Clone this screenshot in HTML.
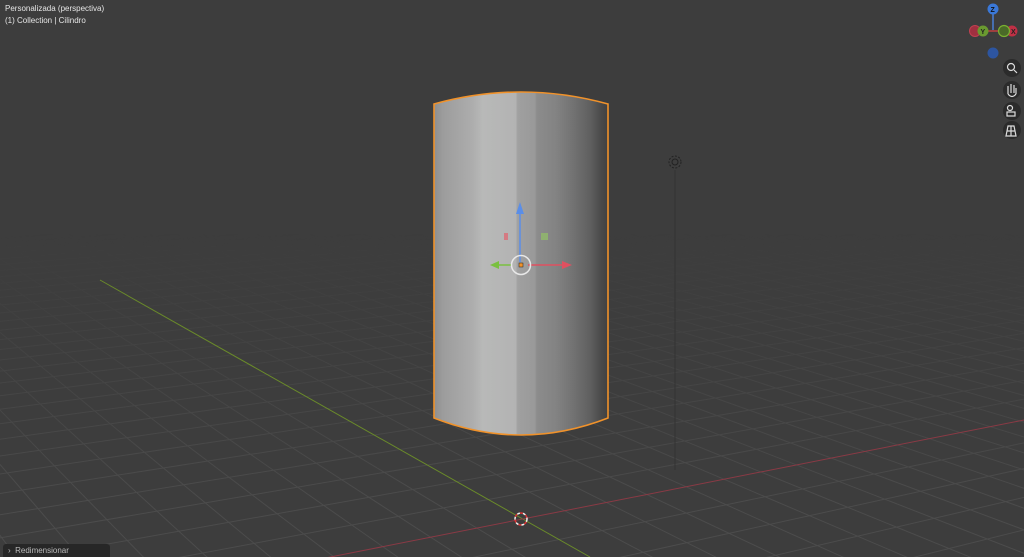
<!DOCTYPE html><html><head><style>
html,body{margin:0;padding:0;background:#3d3d3d;width:1024px;height:557px;overflow:hidden;font-family:"Liberation Sans",sans-serif}
.t{position:absolute;left:5px;color:#e6e6e6;font-size:8px}
.btn{position:absolute;left:1003px;width:18px;height:18px;border-radius:50%;background:#2b2b2b}
</style></head><body>
<svg id="g" width="1024" height="557" style="position:absolute;left:0;top:0">
<defs>
<linearGradient id="fd" x1="0" y1="0" x2="0" y2="1"><stop offset="0.42" stop-color="#fff" stop-opacity="0"/><stop offset="0.9" stop-color="#fff" stop-opacity="1"/></linearGradient>
<mask id="m"><rect width="1024" height="557" fill="url(#fd)"/></mask>
<linearGradient id="cyl" x1="0" x2="1">
<stop offset="0" stop-color="#8e8e8e"/><stop offset="0.05" stop-color="#9c9c9c"/><stop offset="0.12" stop-color="#a3a3a3"/><stop offset="0.22" stop-color="#adadad"/><stop offset="0.28" stop-color="#b8b9b8"/><stop offset="0.47" stop-color="#b3b3b3"/><stop offset="0.48" stop-color="#a0a0a0"/><stop offset="0.58" stop-color="#999"/><stop offset="0.59" stop-color="#8c8c8c"/><stop offset="0.7" stop-color="#838383"/><stop offset="0.8" stop-color="#727272"/><stop offset="0.9" stop-color="#5f5f5f"/><stop offset="0.96" stop-color="#4a4a4a"/><stop offset="1" stop-color="#404040"/>
</linearGradient>
</defs>
<g id="grid" mask="url(#m)" stroke="#4c4c4c" stroke-width="1"></g>
<line x1="100" y1="280" x2="590" y2="557" stroke="#6a8a2a" stroke-width="1"/>
<line x1="300" y1="563" x2="1024" y2="420" stroke="#8a3a45" stroke-width="1"/>
<line x1="675" y1="170" x2="675" y2="470" stroke="#333"/>
<circle cx="675" cy="162" r="6" fill="none" stroke="#222" stroke-dasharray="2 1.5"/><circle cx="675" cy="162" r="3" fill="none" stroke="#222"/>
<path d="M434,104 Q521,80 608,104 L608,418 Q521,452 434,418 Z" fill="url(#cyl)" stroke="#f0922b" stroke-width="1.6"/>
<line x1="520" y1="262" x2="520" y2="210" stroke="#5a8ee8" stroke-width="1.5"/><path d="M516,214 L520,202 L524,214Z" fill="#5a8ee8"/>
<line x1="528" y1="265" x2="566" y2="265" stroke="#e05060" stroke-width="1.5"/><path d="M562,261 L572,265 L562,269Z" fill="#e05060"/>
<line x1="512" y1="265" x2="496" y2="265" stroke="#7ac040" stroke-width="1.5"/><path d="M499,261 L490,265 L499,269Z" fill="#7ac040"/>
<rect x="504" y="233" width="4" height="7" fill="#d47a82"/><rect x="541" y="233" width="7" height="7" fill="#8fb070"/>
<circle cx="521" cy="265" r="9.5" fill="none" stroke="#e8e8e8" stroke-width="1.5"/><rect x="519" y="263" width="4" height="4" fill="#f0922b" stroke="#222" stroke-width=".5"/>
<circle cx="521" cy="519" r="6" fill="none" stroke="#eee" stroke-width="1.5" stroke-dasharray="3 3"/><circle cx="521" cy="519" r="6" fill="none" stroke="#d33" stroke-width="1.5" stroke-dasharray="3 3" stroke-dashoffset="3"/>
<line x1="993" y1="12" x2="993" y2="30" stroke="#4a7fd8" stroke-width="1.5"/><line x1="979" y1="31" x2="1009" y2="31" stroke="#c04040" stroke-width="1.5"/>
<circle cx="975" cy="31" r="5.5" fill="#a03040" stroke="#c04050"/><circle cx="983" cy="31" r="5.5" fill="#6a9a30"/><text x="980.5" y="34" font-size="7" fill="#222" font-family="Liberation Sans" font-weight="bold">Y</text>
<circle cx="1012" cy="31" r="5.5" fill="#c03045"/><circle cx="1004" cy="31" r="5.5" fill="#4a6a28" stroke="#7ab030" stroke-width="1.2"/><text x="1011" y="34" font-size="7" fill="#222" font-family="Liberation Sans" font-weight="bold">X</text>
<circle cx="993" cy="9" r="5.5" fill="#3a78d8"/><text x="990.5" y="12" font-size="7" fill="#111" font-family="Liberation Sans" font-weight="bold">Z</text>
<circle cx="993" cy="53" r="5.5" fill="#2d55a0"/>
</svg>
<div class="t" style="top:4px">Personalizada (perspectiva)</div>
<div class="t" style="top:16px">(1) Collection | Cilindro</div>
<div class="btn" style="top:59px"></div><div class="btn" style="top:81px"></div><div class="btn" style="top:102px"></div><div class="btn" style="top:121px"></div>
<svg width="1024" height="557" style="position:absolute;left:0;top:0" fill="none" stroke="#ddd" stroke-width="1.2">
<circle cx="1011" cy="67" r="3.5"/><line x1="1014" y1="70" x2="1017" y2="73"/>
<path d="M1008,94 L1008,86 M1011,93 L1011,84 M1014,93 L1014,85 M1016,94 L1016,88 M1008,94 Q1012,99 1016,94"/>
<circle cx="1010" cy="108" r="2.5"/><rect x="1007" y="112" width="8" height="4"/>
<path d="M1006,136 L1008,126 L1014,126 L1016,136 Z M1011,126 L1011,136 M1007,131 L1015,131"/>
</svg>
<div style="position:absolute;left:3px;top:544px;width:107px;height:13px;box-sizing:border-box;background:#272727;border-radius:3px 3px 0 0;color:#bbb;font-size:8px;line-height:14px;padding-left:5px;overflow:hidden">›&nbsp; Redimensionar</div>
<script>
var g=document.getElementById('grid'),O=[521,519],A=[-400,0],B=[3155,0],s='';
function P(V,k,D){var f=k/(k+D);return [O[0]+(V[0]-O[0])*f,O[1]+(V[1]-O[1])*f];}
function L(p,q){var dx=q[0]-p[0],dy=q[1]-p[1];return '<line x1="'+(p[0]-dx*20)+'" y1="'+(p[1]-dy*20)+'" x2="'+(p[0]+dx*20)+'" y2="'+(p[1]+dy*20)+'"/>';}
for(var k=-50;k<=150;k++){if(k==0)continue;
 if(k>-60){var p=P(B,k,60);s+=L(A,p);}
 if(k>-26&&k<80){var q=P(A,k,26);s+=L(B,q);}}
g.innerHTML=s;
</script>
</body></html>
